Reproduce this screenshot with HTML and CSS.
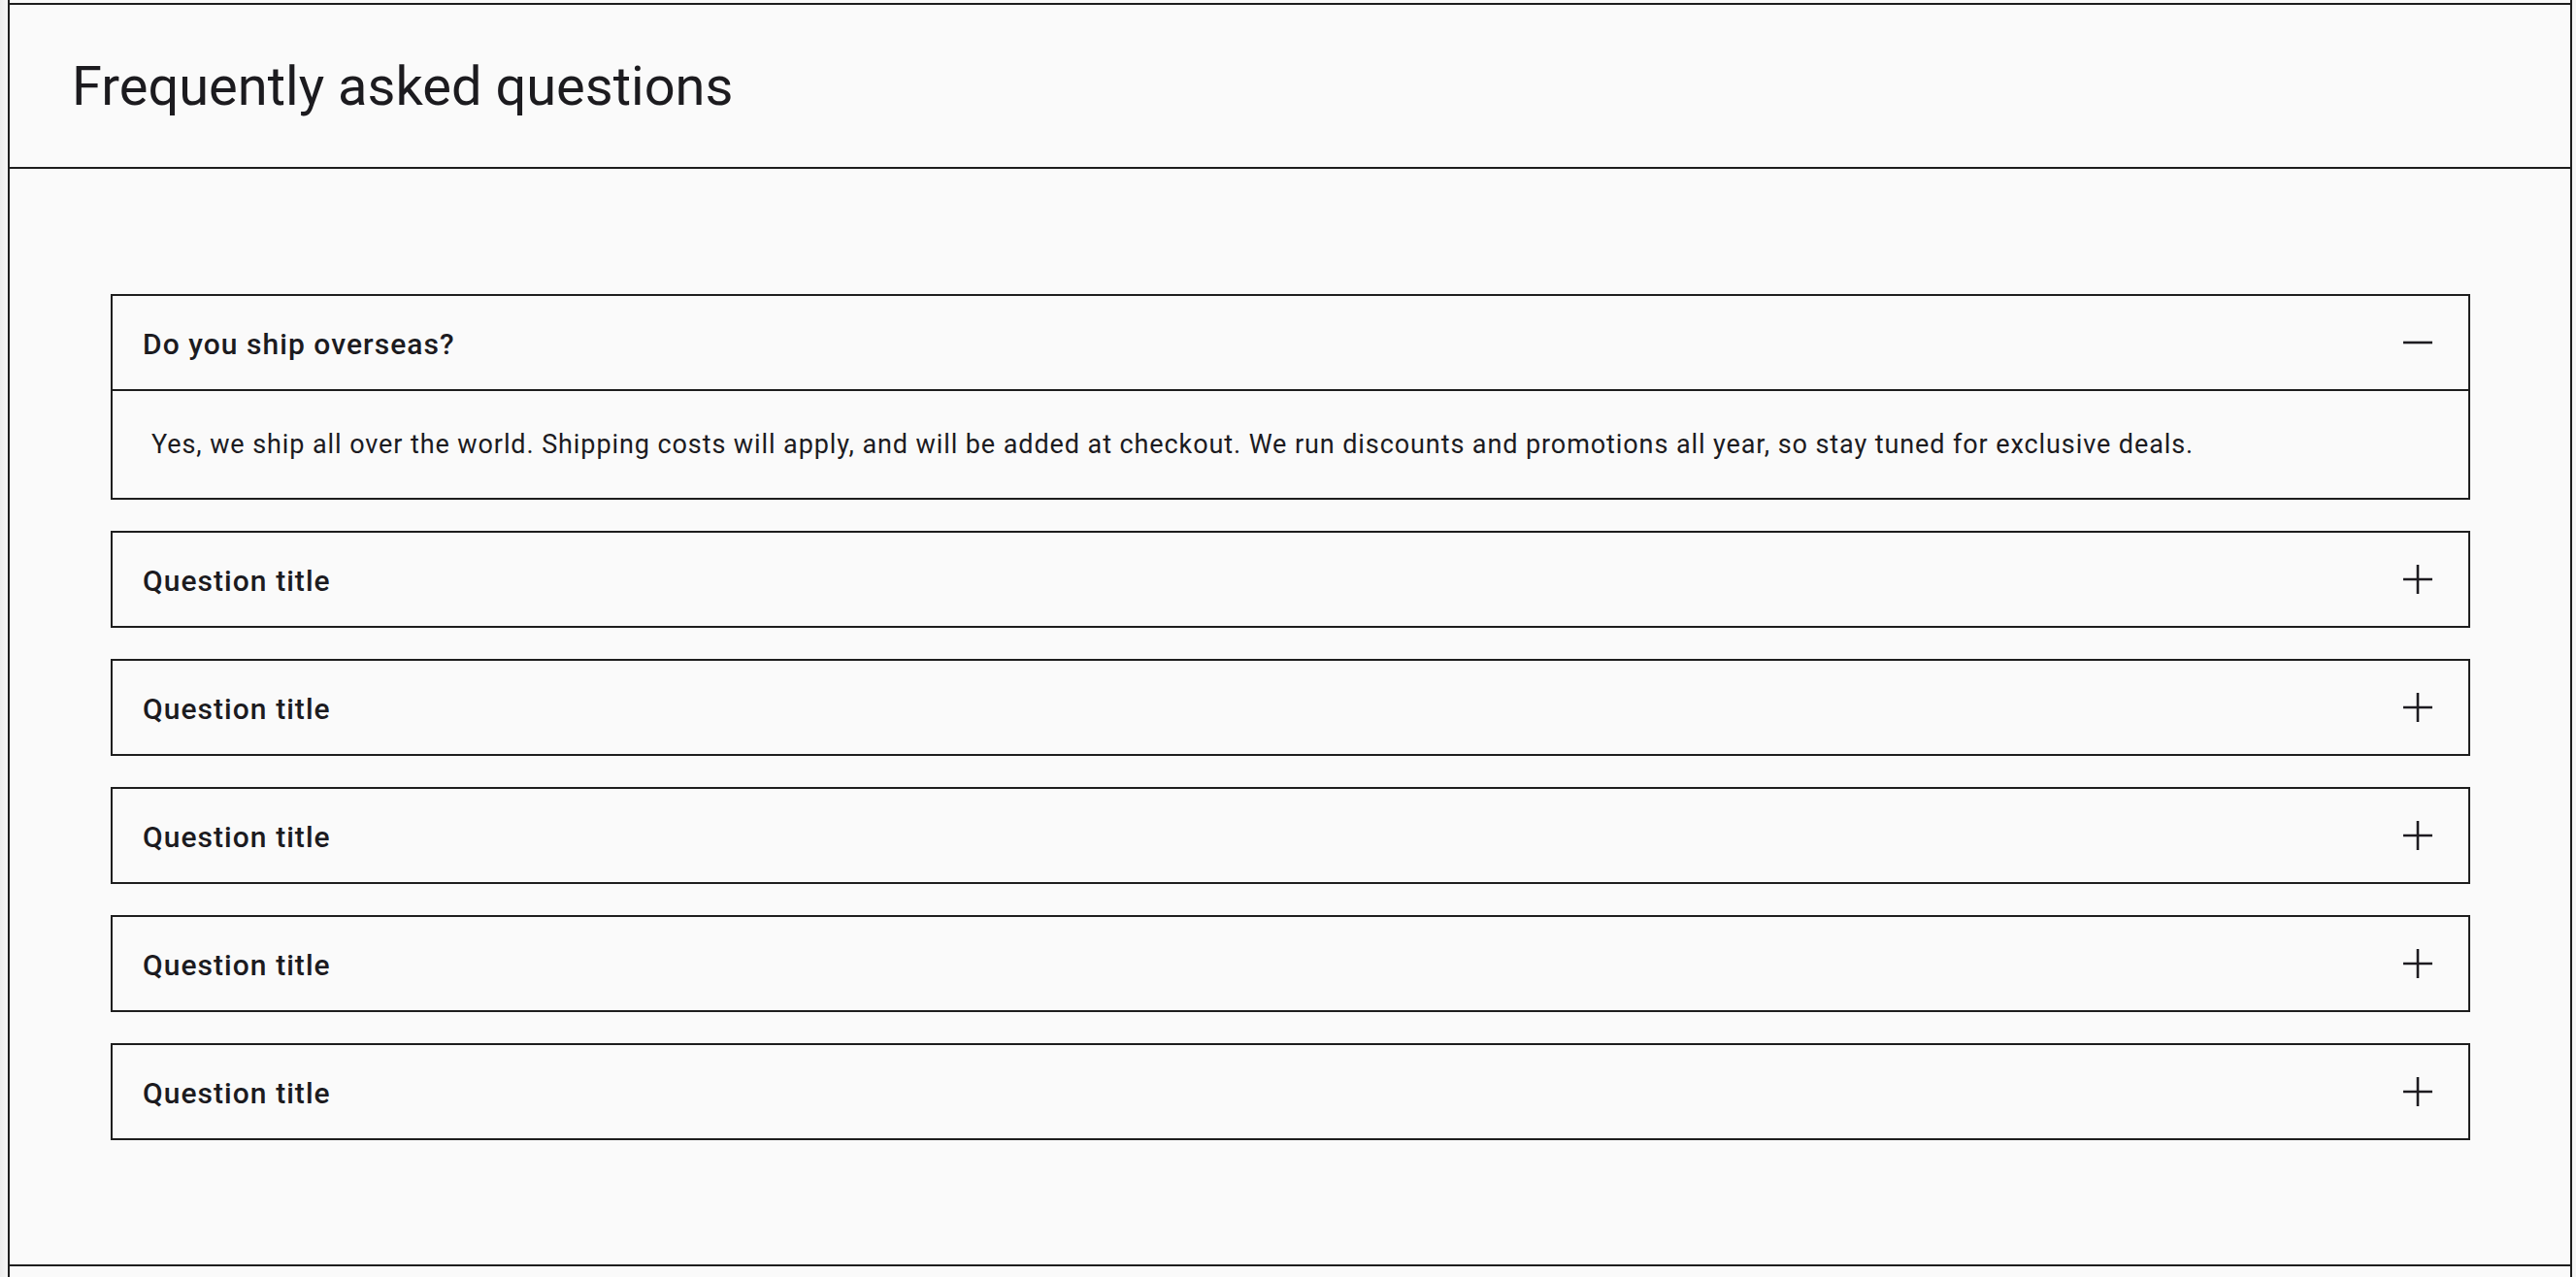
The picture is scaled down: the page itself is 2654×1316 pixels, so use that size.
FILE: index.html
```html
<!DOCTYPE html>
<html lang="en">
<head>
<meta charset="utf-8">
<title>Frequently asked questions</title>
<link rel="stylesheet" href="styles.css">
</head>
<body>
<div class="page">
  <header class="faq-header">
    <h1 class="faq-title">Frequently asked questions</h1>
  </header>
  <section class="faq-section">
    <div class="faq-list">
      <div class="faq-item open">
        <div class="faq-q">
          <span class="faq-q-text">Do you ship overseas?</span>
          <span class="faq-icon"><svg viewBox="0 0 30 30" width="30" height="30"><path d="M0 15H30" stroke="#1d1b20" stroke-width="2.6" fill="none"/></svg></span>
        </div>
        <div class="faq-a">Yes, we ship all over the world. Shipping costs will apply, and will be added at checkout. We run discounts and promotions all year, so stay tuned for exclusive deals.</div>
      </div>
      <div class="faq-item">
        <div class="faq-q">
          <span class="faq-q-text">Question title</span>
          <span class="faq-icon"><svg viewBox="0 0 30 30" width="30" height="30"><path d="M0 15H30M15 0V30" stroke="#1d1b20" stroke-width="2.6" fill="none"/></svg></span>
        </div>
      </div>
      <div class="faq-item">
        <div class="faq-q">
          <span class="faq-q-text">Question title</span>
          <span class="faq-icon"><svg viewBox="0 0 30 30" width="30" height="30"><path d="M0 15H30M15 0V30" stroke="#1d1b20" stroke-width="2.6" fill="none"/></svg></span>
        </div>
      </div>
      <div class="faq-item">
        <div class="faq-q">
          <span class="faq-q-text">Question title</span>
          <span class="faq-icon"><svg viewBox="0 0 30 30" width="30" height="30"><path d="M0 15H30M15 0V30" stroke="#1d1b20" stroke-width="2.6" fill="none"/></svg></span>
        </div>
      </div>
      <div class="faq-item">
        <div class="faq-q">
          <span class="faq-q-text">Question title</span>
          <span class="faq-icon"><svg viewBox="0 0 30 30" width="30" height="30"><path d="M0 15H30M15 0V30" stroke="#1d1b20" stroke-width="2.6" fill="none"/></svg></span>
        </div>
      </div>
      <div class="faq-item">
        <div class="faq-q">
          <span class="faq-q-text">Question title</span>
          <span class="faq-icon"><svg viewBox="0 0 30 30" width="30" height="30"><path d="M0 15H30M15 0V30" stroke="#1d1b20" stroke-width="2.6" fill="none"/></svg></span>
        </div>
      </div>
    </div>
  </section>
  <div class="next-section"></div>
</div>
</body>
</html>
```

FILE: styles.css
```css
html, body {
  margin: 0;
  padding: 0;
}
body {
  background: linear-gradient(90deg, #ececec 0, #f6f6f6 8px, #f6f6f6 100%);
  font-family: Roboto, "Liberation Sans", Arial, sans-serif;
  color: #1c1b1f;
  padding: 0 4px 0 8px;
  min-height: 1316px;
  box-sizing: border-box;
  overflow: hidden;
}
.page {
  background: #fafafa;
  border-left: 2px solid #1e1e1e;
  border-right: 2px solid #1e1e1e;
  padding-top: 3px;
  min-height: 1316px;
  box-sizing: border-box;
}
.faq-header {
  border-top: 2px solid #1e1e1e;
  border-bottom: 2px solid #1e1e1e;
  height: 167px;
  display: flex;
  align-items: center;
  padding: 0 64px;
}
.faq-title {
  margin: 0;
  font-size: 56px;
  font-weight: 400;
  line-height: normal;
  color: #1c1b1f;
}
.faq-section {
  padding: 129px 103px 128px 104px;
  border-bottom: 2px solid #1e1e1e;
}
.faq-list {
  display: flex;
  flex-direction: column;
  gap: 32px;
}
.faq-item {
  border: 2px solid #1e1e1e;
}
.faq-q {
  height: 96px;
  display: flex;
  align-items: center;
  justify-content: space-between;
  padding: 0 32px 0 31px;
}
.faq-q-text {
  font-size: 30px;
  font-weight: 500;
  letter-spacing: 1.05px;
  color: #1c1b1f;
  padding-top: 2px;
}
.faq-icon {
  width: 40px;
  height: 40px;
  display: flex;
  align-items: center;
  justify-content: center;
}
.faq-icon svg {
  display: block;
}
.faq-a {
  border-top: 2px solid #1e1e1e;
  padding: 36px 40px;
  font-size: 27px;
  line-height: 38px;
  letter-spacing: 0.91px;
  color: #1c1b1f;
}
.next-section {
  height: 40px;
}
```
